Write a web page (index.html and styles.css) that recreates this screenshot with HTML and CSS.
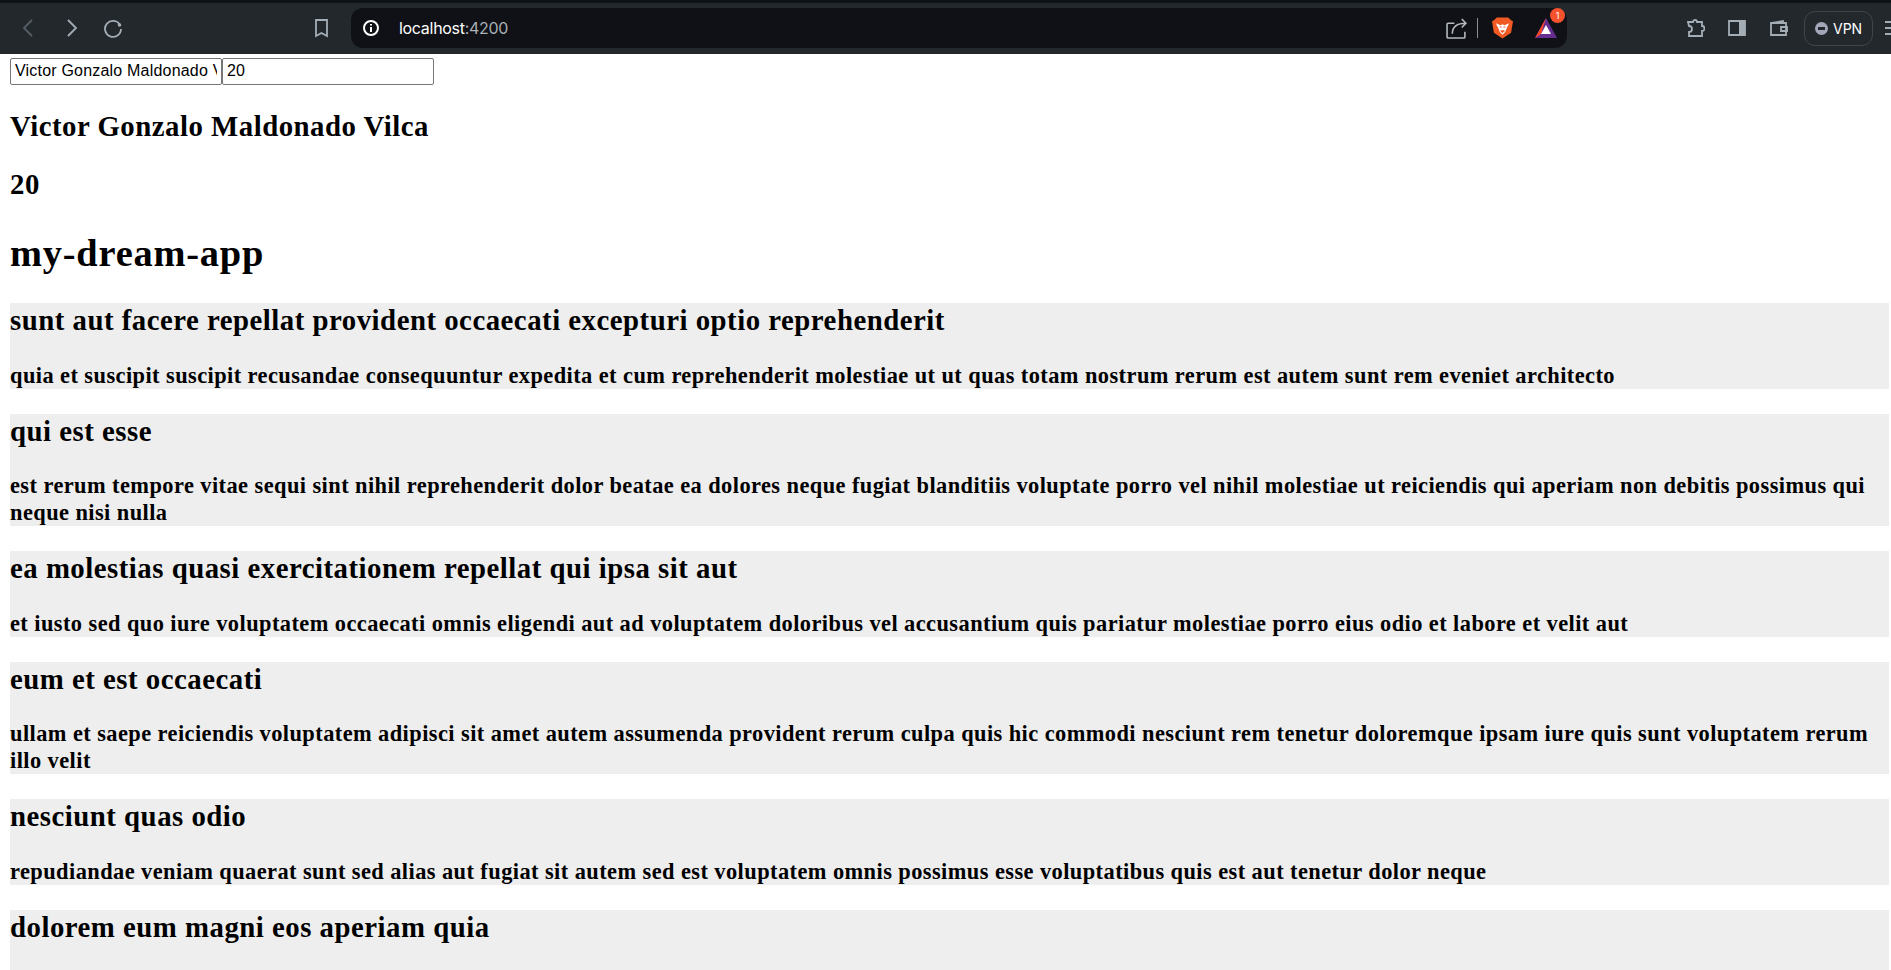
FILE: index.html
```html
<!DOCTYPE html>
<html lang="en">
<head>
  <meta charset="UTF-8">
  <title>my-dream-app</title>
  <link rel="stylesheet" href="styles.css">
</head>
<body>
  <header class="toolbar">
    <div class="nav-icons">
      <svg class="icon dim" viewBox="0 0 20 20"><path d="M13 2 5 10l8 8"/></svg>
      <svg class="icon" viewBox="0 0 20 20"><path d="M7 2l8 8-8 8"/></svg>
      <svg class="icon" viewBox="0 0 20 20"><path d="M17 7a8 8 0 1 0 1 4"/><circle class="fill" cx="16.500" cy="7" r="1.800"/></svg>
    </div>
    <svg class="icon bookmark" viewBox="0 0 20 20"><path d="M5 2h11v16l-5.500-3L5 18z"/></svg>
    <div class="urlbar">
      <svg class="info" viewBox="0 0 18 18"><circle cx="9" cy="9" r="7"/><path d="M9 8v5M9 5v1.500"/></svg>
      <span class="url">localhost<span class="port">:4200</span></span>
      <svg class="icon share" viewBox="0 0 20 20"><path d="M8 5H2a1 1 0 0 0-1 1v12a1 1 0 0 0 1 1h15a1 1 0 0 0 1-1v-5"/><path d="M6 15c0-7 5-10 13-10M15 1l4 4-4 4"/></svg>
      <span class="divider"></span>
      <svg class="brave" viewBox="0 0 22 24"><path d="M5 1h12l3 3 2 1-2 12-9 6-9-6L0 5l2-1z" fill="#f15a22"/><path d="M4 7l5 2 2-1 2 1 5-2-3 6-1 3-3 3-3-3-1-3z" fill="#fff"/><path d="M8 11h2M12 11h2M9 15h4l-2 2z" stroke="#f15a22" fill="#f15a22"/></svg>
      <div class="rewards">
        <svg viewBox="0 0 24 22"><path d="M12 1 1 21h22z" fill="#662d91"/><path d="M12 1 1 21 7 17z" fill="#ff4724"/><path d="M12 8l-5 9h10z" fill="#fff"/></svg>
        <span class="badge">1</span>
      </div>
    </div>
    <div class="right-icons">
      <svg class="icon" viewBox="0 0 20 20"><path d="M3 4h5a2 2 0 0 1 4 0h5v4a2 2 0 0 1 0 5v5H4v-4a2 2 0 0 0 0-6z"/></svg>
      <svg class="icon" viewBox="0 0 20 20"><path d="M2 3h16v14H2z"/><path class="fill" d="M12 3h6v14h-6z"/></svg>
      <svg class="icon" viewBox="0 0 20 20"><path d="M3 5l11-2v2M2 5h15v12H2zM18 9h-6v4h6z"/></svg>
      <span class="vpn"><span class="vpn-dot"></span>VPN</span>
      <svg class="icon menu" viewBox="0 0 10 20"><path d="M0 4h10M0 10h10M0 16h10"/></svg>
    </div>
  </header>

  <main class="page">
    <div class="fields">
      <input type="text" value="Victor Gonzalo Maldonado Vilca"><input type="text" value="20">
    </div>
    <h2>Victor Gonzalo Maldonado Vilca</h2>
    <h2>20</h2>
    <h1>my-dream-app</h1>

    <div class="post">
      <h2>sunt aut facere repellat provident occaecati excepturi optio reprehenderit</h2>
      <h3>quia et suscipit suscipit recusandae consequuntur expedita et cum reprehenderit molestiae ut ut quas totam nostrum rerum est autem sunt rem eveniet architecto</h3>
    </div>
    <div class="post">
      <h2>qui est esse</h2>
      <h3>est rerum tempore vitae sequi sint nihil reprehenderit dolor beatae ea dolores neque fugiat blanditiis voluptate porro vel nihil molestiae ut reiciendis qui aperiam non debitis possimus qui neque nisi nulla</h3>
    </div>
    <div class="post">
      <h2>ea molestias quasi exercitationem repellat qui ipsa sit aut</h2>
      <h3>et iusto sed quo iure voluptatem occaecati omnis eligendi aut ad voluptatem doloribus vel accusantium quis pariatur molestiae porro eius odio et labore et velit aut</h3>
    </div>
    <div class="post">
      <h2>eum et est occaecati</h2>
      <h3>ullam et saepe reiciendis voluptatem adipisci sit amet autem assumenda provident rerum culpa quis hic commodi nesciunt rem tenetur doloremque ipsam iure quis sunt voluptatem rerum illo velit</h3>
    </div>
    <div class="post">
      <h2>nesciunt quas odio</h2>
      <h3>repudiandae veniam quaerat sunt sed alias aut fugiat sit autem sed est voluptatem omnis possimus esse voluptatibus quis est aut tenetur dolor neque</h3>
    </div>
    <div class="post">
      <h2>dolorem eum magni eos aperiam quia</h2>
    </div>
  </main>
</body>
</html>
```

FILE: styles.css
```css
html, body {
  height: 100%;
  margin: 0;
  overflow: hidden;
}
body {
  font-family: "Liberation Serif", serif;
  color: #000;
  background: #fff;
}

/* browser chrome */
.toolbar {
  height: 50px;
  padding-bottom: 1px;
  border-top: 3px solid #0f1216;
  background: #23282d;
  display: flex;
  align-items: center;
  font-family: "Inter", "Roboto", sans-serif;
  color: #fff;
  overflow: hidden;
}
.icon {
  width: 20px;
  height: 20px;
  fill: none;
  stroke: #a3adb5;
  stroke-width: 1.8;
  flex: none;
}
.icon .fill {
  fill: #a3adb5;
  stroke: none;
}
.icon.dim {
  stroke: #565e65;
}
.nav-icons {
  display: flex;
  gap: 22px;
  margin-left: 19px;
}
.bookmark {
  margin-left: 188px;
}
.urlbar {
  width: 1216px;
  height: 40px;
  margin-left: 20px;
  padding: 0 0 0 11px;
  box-sizing: border-box;
  background: #0f1116;
  border-radius: 12px;
  display: flex;
  align-items: center;
  flex: none;
}
.info {
  width: 18px;
  height: 18px;
  fill: none;
  stroke: #fff;
  stroke-width: 2;
}
.url {
  margin-left: 19px;
  font-size: 16px;
  letter-spacing: -0.3px;
  flex: 1;
}
.port {
  color: #a9afb5;
}
.share {
  width: 21px;
  height: 21px;
  margin-right: 1px;
  stroke: #b4babf;
  stroke-width: 1.500;
}
.divider {
  width: 1px;
  height: 20px;
  background: #8a9095;
  margin: 0 14px 0 9px;
}
.brave {
  width: 21px;
  height: 24px;
}
.rewards {
  position: relative;
  width: 24px;
  height: 22px;
  margin-left: 21px;
  margin-right: 9px;
}
.rewards svg {
  display: block;
}
.badge {
  position: absolute;
  top: -9px;
  right: -7px;
  width: 15px;
  height: 15px;
  border-radius: 50%;
  background: #f4512c;
  font-size: 9px;
  line-height: 15px;
  text-align: center;
}
.right-icons {
  display: flex;
  align-items: center;
  gap: 22px;
  margin-left: 118px;
  flex: none;
}
.vpn {
  display: flex;
  align-items: center;
  gap: 5px;
  height: 33px;
  padding: 0 10px;
  margin-left: -7px;
  margin-right: -10px;
  border: 1px solid #3e454b;
  border-radius: 11px;
  font-size: 14px;
}
.vpn-dot {
  position: relative;
  width: 13px;
  height: 13px;
  border-radius: 50%;
  background: #a3a6b8;
}
.vpn-dot::after {
  content: "";
  position: absolute;
  left: 3px;
  right: 3px;
  top: 5px;
  height: 3px;
  background: #23282d;
}
.menu {
  width: 10px;
}

/* app */
.page {
  padding: 4px 2px 0 10px;
}
.fields {
  display: flex;
  height: 26px;
}
input {
  width: 212px;
  height: 27px;
  box-sizing: border-box;
  padding: 0 4px 2px;
  border: 1px solid #767676;
  border-radius: 2px;
  font-family: "Liberation Sans", sans-serif;
  font-size: 16px;
  letter-spacing: 0.2px;
  color: #000;
}
h1 {
  font-size: 38.400px;
  letter-spacing: 0.8px;
  margin: 30px 0 28px;
}
h2 {
  font-size: 28.800px;
  line-height: 34px;
  letter-spacing: 0.5px;
  margin: 24.500px 0;
}
h3 {
  font-size: 22.400px;
  line-height: 27px;
  letter-spacing: 0.43px;
  margin: 24px 0 25px;
}
.post {
  background: #eee;
}
.post:last-child {
  height: 60px;
}
```
